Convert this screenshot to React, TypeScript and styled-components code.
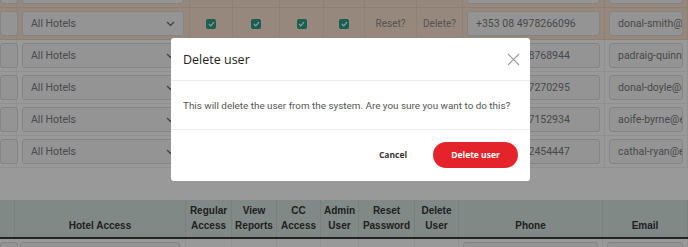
import React from "react";
import styled, { createGlobalStyle } from "styled-components";

const Global = createGlobalStyle`
  html, body { margin: 0; padding: 0; }
  body { font-family: "Liberation Sans", Arial, sans-serif; background: #fff; }
  * { box-sizing: border-box; }
`;

const BODY_COLS = "17px 173px 43px 47px 44px 41px 52px 46px 142px 1fr";
const HEAD_COLS = "15px 171px 46px 45px 44px 38px 56px 44px 144px 1fr";

const Page = styled.div`
  position: relative;
  width: 688px;
  height: 247px;
  overflow: hidden;
  background: #fff;
`;

const Body = styled.div`
  display: flex;
  flex-direction: column;
  margin-top: -24px;
`;

const Row = styled.div<{ $hl?: boolean }>`
  display: grid;
  grid-template-columns: ${BODY_COLS};
  height: 32px;
  background: ${(p) => (p.$hl ? "#fbe3d0" : "#fff")};
  border-bottom: 1px solid ${(p) => (p.$hl ? "#f0d2bb" : "#f0f0f0")};
`;

const Cell = styled.div<{ $center?: boolean; $wide?: boolean }>`
  display: flex;
  align-items: center;
  justify-content: ${(p) => (p.$center ? "center" : "stretch")};
  padding: ${(p) => (p.$wide ? "0 5px" : "0 4px")};
  border-right: 1px solid rgba(0, 0, 0, 0.05);
  min-width: 0;
`;

const EdgeCell = styled(Cell)`
  padding: 0 4px 0 0;
`;

const Field = styled.div`
  flex: 1;
  height: 25px;
  border: 1px solid #dcdcdc;
  border-radius: 3px;
  background: #f7f7f7;
  display: flex;
  align-items: center;
  padding: 0 8px;
  font-family: Roboto, "Liberation Sans", sans-serif;
  font-size: 10.5px;
  color: #7a7a7a;
  white-space: nowrap;
  overflow: hidden;
  justify-content: space-between;
`;

const Check = styled.span`
  width: 10px;
  height: 10px;
  border-radius: 2px;
  background: #2e9e8a;
  display: inline-flex;
  align-items: center;
  justify-content: center;
`;

const LinkText = styled.span`
  font-family: Roboto, "Liberation Sans", sans-serif;
  font-size: 10px;
  color: #8c8c8c;
`;

const Spacer = styled.div`
  height: 32px;
`;

const HeadRow = styled.div`
  display: grid;
  grid-template-columns: ${HEAD_COLS};
  height: 39px;
  background: #d5e4df;
  border-bottom: 2px solid #3a3a3a;
`;

const HeadCell = styled.div`
  display: flex;
  align-items: flex-end;
  justify-content: center;
  text-align: center;
  padding: 0 0 4px;
  border-right: 1px solid rgba(0, 0, 0, 0.06);
  font-family: "Liberation Sans", Arial, sans-serif;
  font-weight: 700;
  font-size: 10px;
  line-height: 15px;
  color: #363636;
  white-space: nowrap;
`;

const TailRow = styled(Row)`
  grid-template-columns: ${HEAD_COLS};
`;

const Backdrop = styled.div`
  position: absolute;
  inset: 0;
  background: rgba(0, 0, 0, 0.4);
  display: flex;
  align-items: flex-start;
  padding: 38px 0 0 171px;
`;

const Modal = styled.div`
  width: 359px;
  height: 143px;
  background: #fff;
  border-radius: 3px;
  display: flex;
  flex-direction: column;
`;

const ModalHead = styled.div`
  height: 43px;
  border-bottom: 1px solid #ececec;
  display: flex;
  align-items: center;
  justify-content: space-between;
  padding: 0 10px 0 12px;
`;

const Title = styled.h2`
  margin: 0;
  font-family: "Open Sans", sans-serif;
  font-weight: 500;
  font-size: 12.5px;
  color: #222;
`;

const Close = styled.button`
  border: 0;
  background: none;
  padding: 0;
  width: 14px;
  height: 14px;
  display: flex;
  align-items: center;
  justify-content: center;
`;

const ModalBody = styled.div`
  height: 49px;
  border-bottom: 1px solid #ececec;
  display: flex;
  align-items: center;
  padding: 0 12px;
  font-family: Roboto, sans-serif;
  font-size: 9.9px;
  color: #555;
  white-space: nowrap;
`;

const Footer = styled.div`
  flex: 1;
  display: flex;
  align-items: center;
  justify-content: flex-end;
  gap: 10px;
  padding: 0 12px 2px;
`;

const Btn = styled.button<{ $primary?: boolean }>`
  border: 0;
  height: 26px;
  width: ${(p) => (p.$primary ? "85px" : "60px")};
  border-radius: 13px;
  background: ${(p) => (p.$primary ? "#e4242a" : "transparent")};
  color: ${(p) => (p.$primary ? "#fff" : "#333")};
  font-family: "Open Sans", sans-serif;
  font-weight: 700;
  font-size: 8.5px;
  cursor: pointer;
`;

const Chevron = () => (
  <svg width="9" height="6" viewBox="0 0 9 6" fill="none">
    <path d="M1 1l3.5 3.5L8 1" stroke="#666" strokeWidth="1.2" />
  </svg>
);

const Tick = () => (
  <svg width="7" height="6" viewBox="0 0 7 6" fill="none">
    <path d="M1 3l1.8 1.8L6 1.2" stroke="#fff" strokeWidth="1.2" />
  </svg>
);

type R = { phone: string; email: string; hl?: boolean; checks?: boolean };

const rows: R[] = [
  { phone: "+353 08 4978260001", email: "first-user@email.com", hl: true },
  { phone: "+353 08 4978266096", email: "donal-smith@email.com", hl: true, checks: true },
  { phone: "+353 08 498768944", email: "padraig-quinn@email.com" },
  { phone: "+353 08 497270295", email: "donal-doyle@email.com" },
  { phone: "+353 08 497152934", email: "aoife-byrne@email.com" },
  { phone: "+353 08 492454447", email: "cathal-ryan@email.com" },
];

const heads = [
  "",
  "Hotel Access",
  "Regular|Access",
  "View|Reports",
  "CC|Access",
  "Admin|User",
  "Reset|Password",
  "Delete|User",
  "Phone",
  "Email",
];

export default function App() {
  return (
    <>
      <Global />
      <Page>
        <Body>
          {rows.map((r, i) => (
            <Row key={i} $hl={r.hl}>
              <EdgeCell>
                <Field />
              </EdgeCell>
              <Cell $wide>
                <Field>
                  All Hotels
                  <Chevron />
                </Field>
              </Cell>
              {[0, 1, 2, 3].map((k) => (
                <Cell key={k} $center>
                  {r.checks && (
                    <Check>
                      <Tick />
                    </Check>
                  )}
                </Cell>
              ))}
              <Cell $center>{r.checks && <LinkText>Reset?</LinkText>}</Cell>
              <Cell $center>{r.checks && <LinkText>Delete?</LinkText>}</Cell>
              <Cell>
                <Field>{r.phone}</Field>
              </Cell>
              <Cell>
                <Field>{r.email}</Field>
              </Cell>
            </Row>
          ))}
        </Body>
        <Spacer />
        <HeadRow>
          {heads.map((h, i) => (
            <HeadCell key={i}>
              <div>
                {h.split("|").map((l, j) => (
                  <div key={j}>{l}</div>
                ))}
              </div>
            </HeadCell>
          ))}
        </HeadRow>
        <TailRow>
          <EdgeCell>
            <Field />
          </EdgeCell>
          <Cell $wide>
            <Field />
          </Cell>
          <Cell />
          <Cell />
          <Cell />
          <Cell />
          <Cell />
          <Cell />
          <Cell>
            <Field />
          </Cell>
          <Cell>
            <Field />
          </Cell>
        </TailRow>
        <Backdrop>
          <Modal role="dialog">
            <ModalHead>
              <Title>Delete user</Title>
              <Close aria-label="Close">
                <svg width="13" height="13" viewBox="0 0 13 13">
                  <path d="M1 1l11 11M12 1L1 12" stroke="#9a9a9a" strokeWidth="1.1" />
                </svg>
              </Close>
            </ModalHead>
            <ModalBody>
              This will delete the user from the system. Are you sure you want to do this?
            </ModalBody>
            <Footer>
              <Btn>Cancel</Btn>
              <Btn $primary>Delete user</Btn>
            </Footer>
          </Modal>
        </Backdrop>
      </Page>
    </>
  );
}
